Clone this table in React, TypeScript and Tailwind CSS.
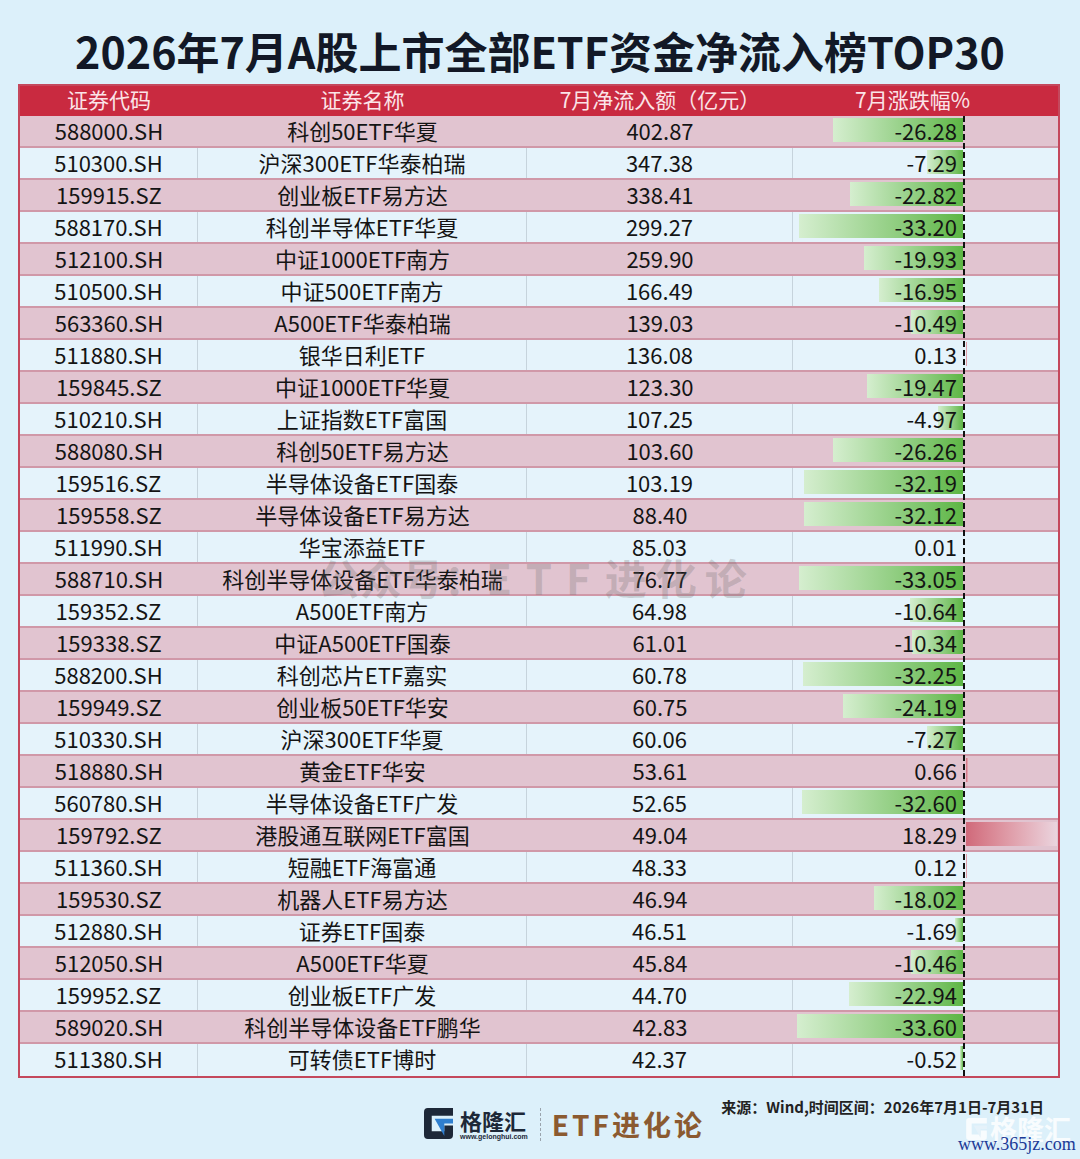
import React from "react";

type Row = [string, string, string, number];

const rows: Row[] = [
  ["588000.SH", "科创50ETF华夏", "402.87", -26.28],
  ["510300.SH", "沪深300ETF华泰柏瑞", "347.38", -7.29],
  ["159915.SZ", "创业板ETF易方达", "338.41", -22.82],
  ["588170.SH", "科创半导体ETF华夏", "299.27", -33.2],
  ["512100.SH", "中证1000ETF南方", "259.90", -19.93],
  ["510500.SH", "中证500ETF南方", "166.49", -16.95],
  ["563360.SH", "A500ETF华泰柏瑞", "139.03", -10.49],
  ["511880.SH", "银华日利ETF", "136.08", 0.13],
  ["159845.SZ", "中证1000ETF华夏", "123.30", -19.47],
  ["510210.SH", "上证指数ETF富国", "107.25", -4.97],
  ["588080.SH", "科创50ETF易方达", "103.60", -26.26],
  ["159516.SZ", "半导体设备ETF国泰", "103.19", -32.19],
  ["159558.SZ", "半导体设备ETF易方达", "88.40", -32.12],
  ["511990.SH", "华宝添益ETF", "85.03", 0.01],
  ["588710.SH", "科创半导体设备ETF华泰柏瑞", "76.77", -33.05],
  ["159352.SZ", "A500ETF南方", "64.98", -10.64],
  ["159338.SZ", "中证A500ETF国泰", "61.01", -10.34],
  ["588200.SH", "科创芯片ETF嘉实", "60.78", -32.25],
  ["159949.SZ", "创业板50ETF华安", "60.75", -24.19],
  ["510330.SH", "沪深300ETF华夏", "60.06", -7.27],
  ["518880.SH", "黄金ETF华安", "53.61", 0.66],
  ["560780.SH", "半导体设备ETF广发", "52.65", -32.6],
  ["159792.SZ", "港股通互联网ETF富国", "49.04", 18.29],
  ["511360.SH", "短融ETF海富通", "48.33", 0.12],
  ["159530.SZ", "机器人ETF易方达", "46.94", -18.02],
  ["512880.SH", "证券ETF国泰", "46.51", -1.69],
  ["512050.SH", "A500ETF华夏", "45.84", -10.46],
  ["159952.SZ", "创业板ETF广发", "44.70", -22.94],
  ["589020.SH", "科创半导体设备ETF鹏华", "42.83", -33.6],
  ["511380.SH", "可转债ETF博时", "42.37", -0.52],
];

const SCALE = 4.95;
const LINE = 170;

function GLogo({ className, dark, blue }: { className?: string; dark: string; blue: string }) {
  return (
    <svg viewBox="0 0 30 32" className={className}>
      <path
        d="M0 4 Q0 0 4 0 H30 V8 H8 V24 H21 V18 H30 V28 Q30 32 26 32 H4 Q0 32 0 28 Z"
        fill={dark}
      />
      <path d="M11 11 H30 V16 H21 V29 Z" fill={blue} />
    </svg>
  );
}

export default function App() {
  return (
    <div className="relative w-[1080px] h-[1159px] overflow-hidden bg-[#dcf0fa] text-[#141414] font-['Noto_Sans_CJK_SC','Noto_Sans',sans-serif]">
      <div className="flex h-[84px] items-center justify-center pt-[16px]">
        <h1 className="text-[43px] font-bold leading-none text-[#121826]">
          2026年7月A股上市全部ETF资金净流入榜TOP30
        </h1>
      </div>

      <div className="mx-[18px] w-[1042px] border-2 border-[#c4485c]">
        <div className="grid h-[30px] grid-cols-[178px_329px_266px_265px] bg-[#c92a40] pb-[3px] text-[21px] leading-[27px] text-[#fbe4e8]">
          <div className="text-center">证券代码</div>
          <div className="text-center">证券名称</div>
          <div className="text-center">7月净流入额（亿元）</div>
          <div className="pr-[26px] text-center">7月涨跌幅%</div>
        </div>
        <div className="relative">
          {rows.map((r, i) => {
            const pink = i % 2 === 0;
            const last = i === rows.length - 1;
            const w = Math.abs(r[3]) * SCALE;
            const neg = r[3] < 0;
            return (
              <div
                key={r[0]}
                className={`grid h-[32px] grid-cols-[178px_329px_266px_265px] text-[22px] leading-[29px] ${
                  pink ? "bg-[#e1c4d0]" : "bg-[#e5f3fb]"
                } ${last ? "" : "border-b-2 border-[#d098a8]"}`}
              >
                <div className={`text-center ${pink ? "" : "border-r border-[#c6d3dc]"}`}>{r[0]}</div>
                <div className={`whitespace-nowrap text-center ${pink ? "" : "border-r border-[#c6d3dc]"}`}>{r[1]}</div>
                <div className={`text-center ${pink ? "" : "border-r border-[#c6d3dc]"}`}>{r[2]}</div>
                <div className="relative">
                  {neg ? (
                    <div
                      className="absolute top-[2px] h-[24px] bg-linear-to-r from-[#d5eecf] to-[#5db644]"
                      style={{ left: LINE - w, width: w }}
                    />
                  ) : (
                    <div
                      className="absolute top-[2px] h-[24px] bg-linear-to-r from-[#d0697a] to-[#ead4de]"
                      style={{ left: LINE + 3, width: w }}
                    />
                  )}
                  <div className="relative z-10 w-[170px] pr-[6px] text-right">
                    {r[3].toFixed(2)}
                  </div>
                </div>
              </div>
            );
          })}
          <div className="pointer-events-none absolute bottom-0 left-[943px] top-0 z-20 w-[2px] bg-[repeating-linear-gradient(to_bottom,#111_0px,#111_6px,transparent_6px,transparent_9px)]" />
        </div>
      </div>

      <div className="flex items-start">
        <div className="ml-[424px] mt-[30px] flex items-start">
          <GLogo className="h-[31px] w-[29px]" dark="#1d2838" blue="#2f7fcf" />
          <div className="ml-[7px] flex flex-col">
            <div className="text-[22px] font-bold leading-[24px] tracking-[0px] text-[#1d2838]">格隆汇</div>
            <div className="mt-[1px] text-[7px] font-bold leading-[8px] text-[#1d2838] font-['Liberation_Sans',sans-serif]">
              www.gelonghui.com
            </div>
          </div>
          <div className="ml-[12px] h-[33px] border-l border-dashed border-[#9aa4ad]" />
          <div className="ml-[11px] text-[28px] font-bold leading-[32px] tracking-[3px] text-[#8b5a30]">
            ETF进化论
          </div>
        </div>
        <div className="ml-auto mr-[36px] mt-[19px] text-[15px] font-bold leading-[20px] text-[#222]">
          来源：Wind,时间区间：2026年7月1日-7月31日
        </div>
      </div>

      <div className="pointer-events-none absolute left-[318px] top-[551px] z-30 flex items-center text-[42px] font-bold leading-[52px] text-[rgba(105,105,105,0.26)]">
        <span>公众号：</span>
        <span className="tracking-[14px]">ETF</span>
        <span className="tracking-[8px]">进化论</span>
      </div>

      <div className="pointer-events-none absolute left-[966px] top-[1115px] flex items-center gap-[3px] opacity-80">
        <GLogo className="h-[22px] w-[21px]" dark="#ffffff" blue="#e8f3fa" />
        <span className="text-[27px] font-bold leading-[28px] text-white">格隆汇</span>
      </div>
      <div className="absolute left-[958px] top-[1134px] text-[18px] leading-[20px] text-[#1b3a96] font-['Liberation_Serif',serif]">
        www.365jz.com
      </div>
    </div>
  );
}
